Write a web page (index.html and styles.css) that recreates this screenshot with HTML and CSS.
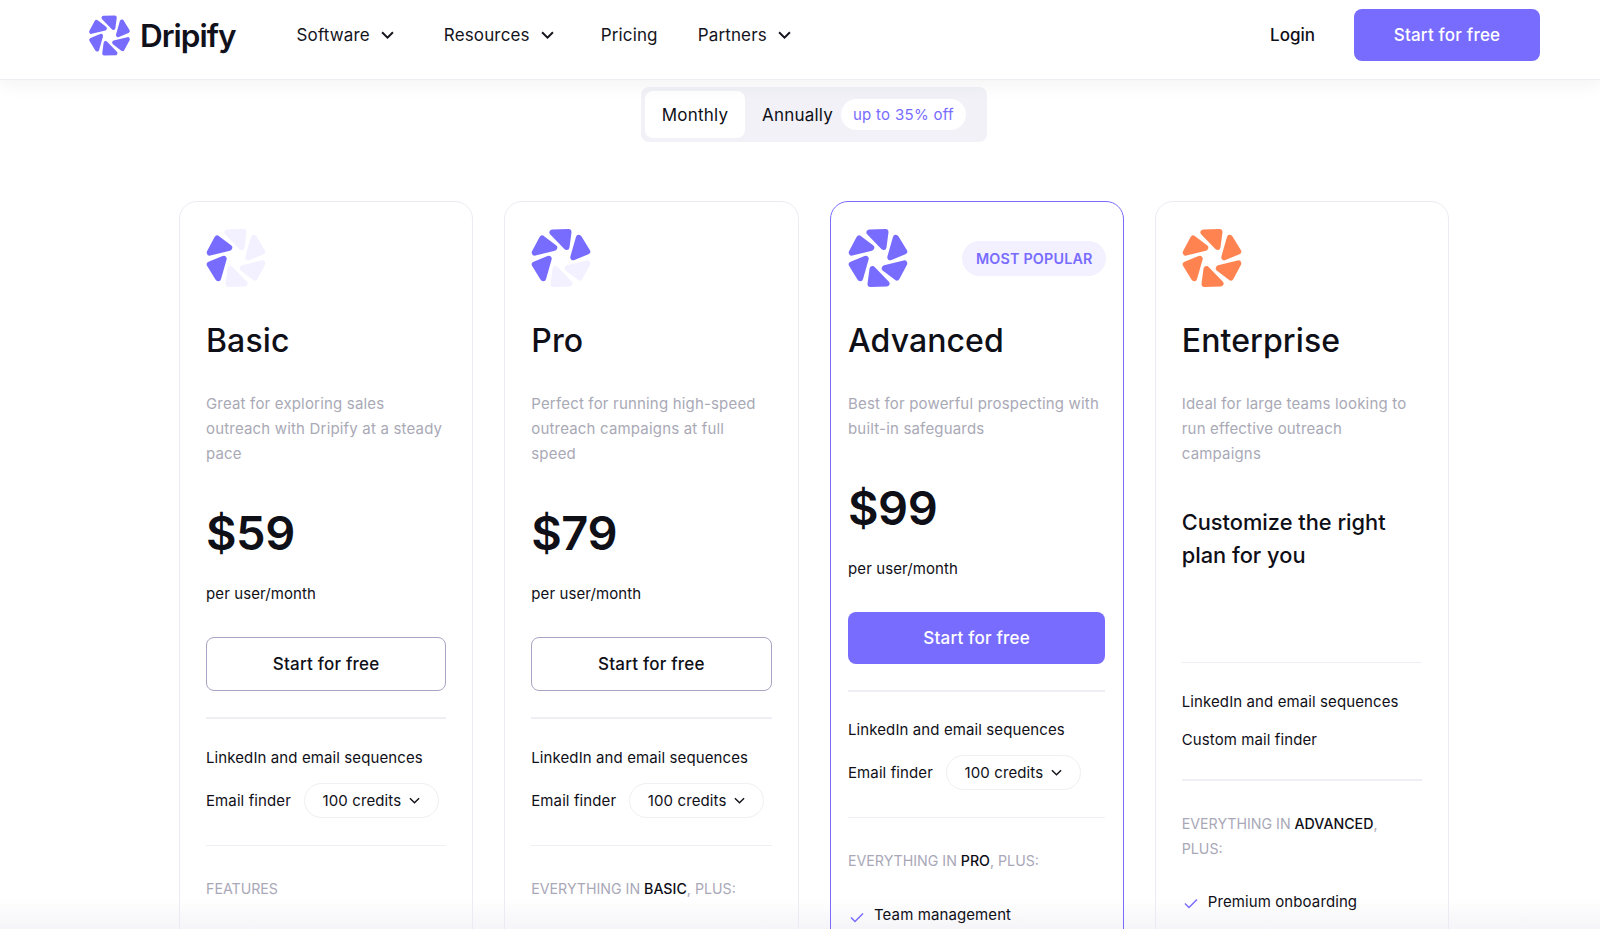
FILE: index.html
```html
<!DOCTYPE html>
<html lang="en">
<head>
<meta charset="utf-8">
<title>Dripify Pricing</title>
<link rel="stylesheet" href="styles.css">
</head>
<body>
<svg class="defs" width="0" height="0" aria-hidden="true">
  <defs>
    <polygon id="petal" points="-8.5,-25.5 7.5,-26 5.5,-11"/>
    <path id="chev" d="M1 1l5 5 5-5"/>
    <path id="tick" d="M1 5.5l4 4 8-8"/>
  </defs>
</svg>
<header class="topbar">
  <a class="brand">
    <svg class="mark mark-sm" viewBox="-31 -31 62 62">
      <use href="#petal"/><use href="#petal" transform="rotate(60)"/><use href="#petal" transform="rotate(120)"/><use href="#petal" transform="rotate(180)"/><use href="#petal" transform="rotate(240)"/><use href="#petal" transform="rotate(300)"/>
    </svg>
    <span class="brand-name">Dripify</span>
  </a>
  <nav class="nav">
    <a class="nav-item">Software <svg class="nav-chev" viewBox="0 0 12 7"><use href="#chev"/></svg></a>
    <a class="nav-item">Resources <svg class="nav-chev" viewBox="0 0 12 7"><use href="#chev"/></svg></a>
    <a class="nav-item nav-plain">Pricing</a>
    <a class="nav-item">Partners <svg class="nav-chev" viewBox="0 0 12 7"><use href="#chev"/></svg></a>
  </nav>
  <a class="login">Login</a>
  <a class="btn btn-solid btn-top">Start for free</a>
</header>

<div class="fade"></div>
<main class="page">
  <div class="toggle">
    <span class="tab tab-on">Monthly</span>
    <span class="tab">Annually</span>
    <span class="off">up to 35% off</span>
  </div>

  <section class="plans">
    <article class="card">
      <div class="card-head">
        <svg class="mark" viewBox="-31 -31 62 62">
          <g class="dim"><use href="#petal"/><use href="#petal" transform="rotate(60)"/><use href="#petal" transform="rotate(120)"/><use href="#petal" transform="rotate(180)"/></g>
          <use href="#petal" transform="rotate(240)"/><use href="#petal" transform="rotate(300)"/>
        </svg>
      </div>
      <h2 class="plan">Basic</h2>
      <p class="desc desc-3">Great for exploring sales outreach with Dripify at a steady pace</p>
      <div class="price">$59</div>
      <p class="per">per user/month</p>
      <a class="btn btn-line">Start for free</a>
      <hr class="rule">
      <p class="line first">LinkedIn and email sequences</p>
      <div class="finder"><span>Email finder</span><span class="pill">100 credits <svg class="pill-chev" viewBox="0 0 12 7"><use href="#chev"/></svg></span></div>
      <hr class="rule rule-b">
      <p class="caps">FEATURES</p>
    </article>

    <article class="card">
      <div class="card-head">
        <svg class="mark" viewBox="-31 -31 62 62">
          <g class="dim"><use href="#petal" transform="rotate(120)"/><use href="#petal" transform="rotate(180)"/></g>
          <use href="#petal"/><use href="#petal" transform="rotate(60)"/><use href="#petal" transform="rotate(240)"/><use href="#petal" transform="rotate(300)"/>
        </svg>
      </div>
      <h2 class="plan">Pro</h2>
      <p class="desc desc-3">Perfect for running high-speed outreach campaigns at full speed</p>
      <div class="price">$79</div>
      <p class="per">per user/month</p>
      <a class="btn btn-line">Start for free</a>
      <hr class="rule">
      <p class="line first">LinkedIn and email sequences</p>
      <div class="finder"><span>Email finder</span><span class="pill">100 credits <svg class="pill-chev" viewBox="0 0 12 7"><use href="#chev"/></svg></span></div>
      <hr class="rule rule-b">
      <p class="caps">EVERYTHING IN <b>BASIC</b>, PLUS:</p>
    </article>

    <article class="card card-top">
      <div class="card-head">
        <svg class="mark" viewBox="-31 -31 62 62">
          <use href="#petal"/><use href="#petal" transform="rotate(60)"/><use href="#petal" transform="rotate(120)"/><use href="#petal" transform="rotate(180)"/><use href="#petal" transform="rotate(240)"/><use href="#petal" transform="rotate(300)"/>
        </svg>
        <span class="popular">MOST POPULAR</span>
      </div>
      <h2 class="plan">Advanced</h2>
      <p class="desc desc-2">Best for powerful prospecting with built-in safeguards</p>
      <div class="price">$99</div>
      <p class="per">per user/month</p>
      <a class="btn btn-solid btn-card">Start for free</a>
      <hr class="rule rule-s">
      <p class="line first first-s">LinkedIn and email sequences</p>
      <div class="finder"><span>Email finder</span><span class="pill">100 credits <svg class="pill-chev" viewBox="0 0 12 7"><use href="#chev"/></svg></span></div>
      <hr class="rule rule-b">
      <p class="caps">EVERYTHING IN <b>PRO</b>, PLUS:</p>
      <p class="check"><svg class="tick" viewBox="0 0 14 11"><use href="#tick"/></svg>Team management</p>
    </article>

    <article class="card card-orange">
      <div class="card-head">
        <svg class="mark" viewBox="-31 -31 62 62">
          <use href="#petal"/><use href="#petal" transform="rotate(60)"/><use href="#petal" transform="rotate(120)"/><use href="#petal" transform="rotate(180)"/><use href="#petal" transform="rotate(240)"/><use href="#petal" transform="rotate(300)"/>
        </svg>
      </div>
      <h2 class="plan">Enterprise</h2>
      <p class="desc desc-3">Ideal for large teams looking to run effective outreach campaigns</p>
      <p class="custom">Customize the right plan for you</p>
      <hr class="rule rule-c">
      <p class="line first">LinkedIn and email sequences</p>
      <p class="line second">Custom mail finder</p>
      <hr class="rule rule-b">
      <p class="caps">EVERYTHING IN <b>ADVANCED</b>,<br>PLUS:</p>
      <p class="check check-e"><svg class="tick" viewBox="0 0 14 11"><use href="#tick"/></svg>Premium onboarding</p>
    </article>
  </section>
</main>
</body>
</html>
```
FILE: styles.css
```css
* { box-sizing: border-box; }
html, body { margin: 0; height: 100%; }
body {
  position: relative;
  height: 929px;
  overflow: hidden;
  background: #fff;
  color: #0f0f18;
  font-family: Inter, "Liberation Sans", sans-serif;
  font-size: 15px;
}
.defs { display: block; height: 0; }
p, h2 { margin: 0; }

/* top bar */
.topbar {
  position: relative;
  z-index: 2;
  display: flex;
  align-items: center;
  height: 79px;
  padding: 0 60px 9px 88px;
  background: #fff;
  box-shadow: 0 1px 0 #efeff3, 0 5px 18px rgba(30, 30, 70, .06);
}
.brand { display: flex; align-items: center; gap: 9px; }
.mark { display: block; flex: none; width: 62px; height: 62px; fill: #786cff; stroke: #786cff; stroke-width: 6; stroke-linejoin: round; }
.mark-sm { width: 43px; height: 43px; }
.mark .dim { fill: #f3f0ff; stroke: #f3f0ff; }
.brand-name { font-size: 31.5px; font-weight: 600; letter-spacing: -1px; color: #11111c; }
.nav { display: flex; align-items: center; gap: 50px; margin-left: 61px; }
.nav-item { display: flex; align-items: center; gap: 11px; font-size: 17px; letter-spacing: .15px; color: #14141d; }
.nav-plain { margin-left: -3px; margin-right: -10px; }
.nav-chev { width: 13px; height: 8px; fill: none; stroke: #14141d; stroke-width: 1.8; overflow: visible; }
.login { margin-left: auto; margin-right: 39px; font-size: 17px; font-weight: 500; }

/* buttons */
.btn { display: flex; align-items: center; justify-content: center; font-weight: 500; font-size: 17px; letter-spacing: .2px; border-radius: 8px; }
.btn-solid { background: #786cff; color: #fff; }
.btn-top { width: 186px; height: 52px; }
.btn-card { height: 52px; margin-top: 30.5px; }
.btn-line { height: 54px; margin-top: 31px; border: 1px solid #a7a5c4; }

/* billing switch */
.page { position: relative; z-index: 1; display: flex; flex-direction: column; margin-left: 179px; width: 1270px; }
.toggle {
  align-self: center;
  display: flex;
  align-items: center;
  width: 346px;
  height: 55px;
  margin-top: 8px;
  padding: 0 4px;
  background: #f1f1f7;
  border-radius: 8px;
  font-size: 17px;
}
.tab { display: flex; align-items: center; height: 47px; padding: 0 17px; letter-spacing: .2px; }
.tab-on { width: 100px; justify-content: center; padding: 0; background: #fff; border-radius: 8px; }
.off {
  display: flex;
  align-items: center;
  justify-content: center;
  width: 125px;
  height: 31px;
  margin-left: -9px;
  background: #fff;
  border-radius: 16px;
  color: #786cff;
  font-size: 15px;
  letter-spacing: .3px;
}

/* plans */
.plans { display: grid; grid-template-columns: repeat(4, 1fr); gap: 31px; margin-top: 59px; }
.card {
  display: flex;
  flex-direction: column;
  min-height: 800px;
  padding: 26px 26px 0;
  border: 1.5px solid #ecebf3;
  border-radius: 18px;
}
.card-top { padding: 26px 17.5px 0; border-color: #786cff; }
.card-orange .mark { fill: #ff8350; stroke: #ff8350; }
.card-head { display: flex; align-items: center; justify-content: space-between; height: 60px; margin-left: -1px; }
.popular {
  display: flex;
  align-items: center;
  justify-content: center;
  width: 144px;
  height: 35px;
  margin-right: -1px;
  background: #f3f0ff;
  border-radius: 18px;
  color: #786cff;
  font-size: 14.3px;
  font-weight: 600;
  letter-spacing: .2px;
}
.plan { margin-top: 31px; font-size: 32px; line-height: 44px; font-weight: 500; letter-spacing: .1px; }
.desc { margin-top: 28px; font-size: 15px; line-height: 25px; letter-spacing: .18px; color: #a9a9b6; }
.desc-3 { height: 75px; }
.desc-2 { height: 50px; }
.price { margin-top: 37px; font-size: 47px; line-height: 60px; font-weight: 600; letter-spacing: -.5px; }
.per { margin-top: 19px; font-size: 15px; line-height: 24px; letter-spacing: .1px; }
.custom { margin-top: 40px; font-size: 21.8px; line-height: 33px; font-weight: 500; }
.rule { width: 100%; margin: 26px 0 0; height: 1.5px; border: 0; background: #eeeef4; }
.rule-s { margin-top: 26.5px; }
.rule-b { margin-top: 27px; }
.rule-c { margin-top: 89.5px; }
.line { font-size: 15px; line-height: 24px; letter-spacing: .1px; }
.first { margin-top: 27px; }
.first-s { margin-top: 26px; }
.second { margin-top: 14px; }
.finder { display: flex; align-items: center; gap: 13px; margin-top: 13px; font-size: 15px; letter-spacing: .1px; }
.pill {
  display: flex;
  align-items: center;
  justify-content: center;
  gap: 8px;
  width: 135px;
  height: 35px;
  border: 1.5px solid #efeff4;
  border-radius: 18px;
}
.pill-chev { width: 11px; height: 7px; fill: none; stroke: #14141d; stroke-width: 1.6; overflow: visible; }
.caps { margin-top: 30px; font-size: 14.2px; line-height: 25px; color: #a9a8b8; }
.caps b { font-weight: 500; color: #0f0f18; }
.check { display: flex; align-items: center; gap: 10px; margin-top: 30px; font-size: 15px; line-height: 24px; letter-spacing: .1px; }
.check-e { margin-top: 29px; }
.tick { width: 14px; height: 11px; margin-top: 4px; margin-left: 2px; fill: none; stroke: #786cff; stroke-width: 1.5; }

/* soft fade at the bottom, behind the page */
.fade {
  position: absolute;
  left: 0;
  right: 0;
  bottom: 0;
  height: 30px;
  background: linear-gradient(to bottom, rgba(245, 244, 248, 0), #f5f4f8);
  pointer-events: none;
}
```
